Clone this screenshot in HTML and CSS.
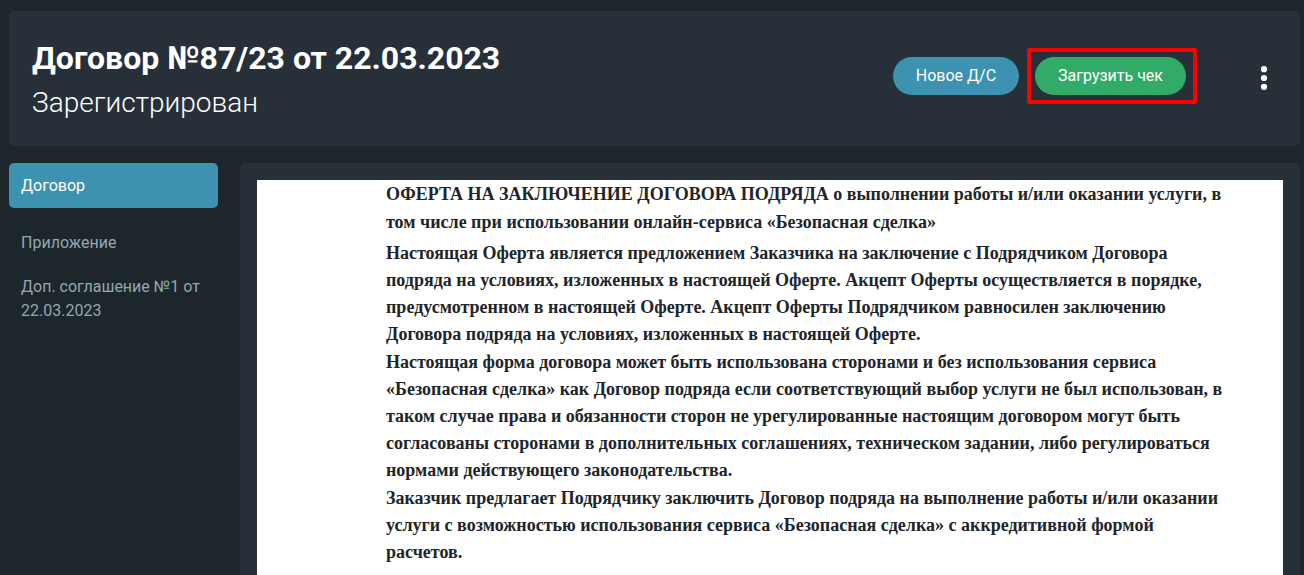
FILE: index.html
```html
<!DOCTYPE html>
<html lang="ru">
<head>
<meta charset="utf-8">
<meta name="viewport" content="width=device-width, initial-scale=1">
<title>Договор №87/23</title>
<link rel="stylesheet" href="styles.css">
</head>
<body>
<div class="page">
  <header class="header">
    <div class="heading">
      <h1 class="title">Договор №87/23 от 22.03.2023</h1>
      <p class="status">Зарегистрирован</p>
    </div>
    <div class="actions">
      <button class="btn btn-blue" type="button">Новое Д/С</button>
      <div class="highlight"><button class="btn btn-green" type="button">Загрузить чек</button></div>
      <button class="menu" type="button" aria-label="Меню">
        <svg width="8" height="26" viewBox="0 0 8 26" fill="#fff"><circle cx="4" cy="4.2" r="3.1"/><circle cx="4" cy="13" r="3.1"/><circle cx="4" cy="21.8" r="3.1"/></svg>
      </button>
    </div>
  </header>
  <div class="body">
    <nav class="nav">
      <a class="link active" href="#contract">Договор</a>
      <a class="link" href="#appendix">Приложение</a>
      <a class="link" href="#extra">Доп. соглашение №1 от 22.03.2023</a>
    </nav>
    <main class="panel">
      <article class="doc">
        <h2 class="doc-title">ОФЕРТА НА ЗАКЛЮЧЕНИЕ ДОГОВОРА ПОДРЯДА о выполнении работы и/или оказании услуги, в<br>том числе при использовании онлайн-сервиса «Безопасная сделка»</h2>
        <p>Настоящая Оферта является предложением Заказчика на заключение с Подрядчиком Договора<br>подряда на условиях, изложенных в настоящей Оферте. Акцепт Оферты осуществляется в порядке,<br>предусмотренном в настоящей Оферте. Акцепт Оферты Подрядчиком равносилен заключению<br>Договора подряда на условиях, изложенных в настоящей Оферте.</p>
        <p>Настоящая форма договора может быть использована сторонами и без использования сервиса<br>«Безопасная сделка» как Договор подряда если соответствующий выбор услуги не был использован, в<br>таком случае права и обязанности сторон не урегулированные настоящим договором могут быть<br>согласованы сторонами в дополнительных соглашениях, техническом задании, либо регулироваться<br>нормами действующего законодательства.</p>
        <p>Заказчик предлагает Подрядчику заключить Договор подряда на выполнение работы и/или оказании<br>услуги с возможностью использования сервиса «Безопасная сделка» с аккредитивной формой<br>расчетов.</p>
      </article>
    </main>
  </div>
</div>
</body>
</html>
```
FILE: styles.css
```css
* { box-sizing: border-box; }
body { margin: 0; background: #1c262b; color: #fff; font-family: Roboto, sans-serif; font-size: 16px; }
.page { display: flex; flex-direction: column; gap: 17px; height: 100vh; overflow: hidden; padding: 11px 4px 0 9px; }
.header { display: flex; justify-content: space-between; align-items: flex-start; flex: none; padding: 24px 32px 22px 23px; background: #273039; border-radius: 5px; }
.title { margin: 0; font-size: 32px; line-height: 46px; font-weight: 700; }
.status { margin: 0; font-size: 28px; line-height: 43px; font-weight: 300; }
.actions { display: flex; align-items: center; gap: 8px; padding-top: 13px; }
.btn { display: block; height: 38px; padding: 0 23px; border: 0; border-radius: 19px; color: #fff; font: 400 16px/38px Roboto, sans-serif; }
.btn-blue { background: #3c92b0; }
.btn-green { background: #32ab69; }
.highlight { padding: 5px 7px 5px 4px; border: 4px solid #fe0000; border-radius: 2px; }
.menu { display: flex; margin-left: 55px; padding: 4px 0 0; border: 0; background: none; }
.body { display: flex; gap: 22px; flex: 1; min-height: 0; }
.nav { flex: none; width: 209px; }
.link { display: block; padding: 10px 12px; color: #94a7b2; line-height: 24px; text-decoration: none; }
.active { margin-bottom: 13px; padding-top: 11px; color: #fff; background: #3c92b0; border-radius: 5px; }
.panel { flex: 1; min-width: 0; padding: 17px 17px 0; background: #273039; border-radius: 5px 5px 0 0; }
.doc { height: 100%; padding: 0 64px 0 129px; background: #fff; color: #212529; font: 700 18px/27px "Liberation Serif", serif; white-space: nowrap; }
.doc-title { margin: 0 0 4px; font: inherit; line-height: 28px; }
.doc p { margin: 0; }
.doc p + p { margin-top: 1px; }
```
